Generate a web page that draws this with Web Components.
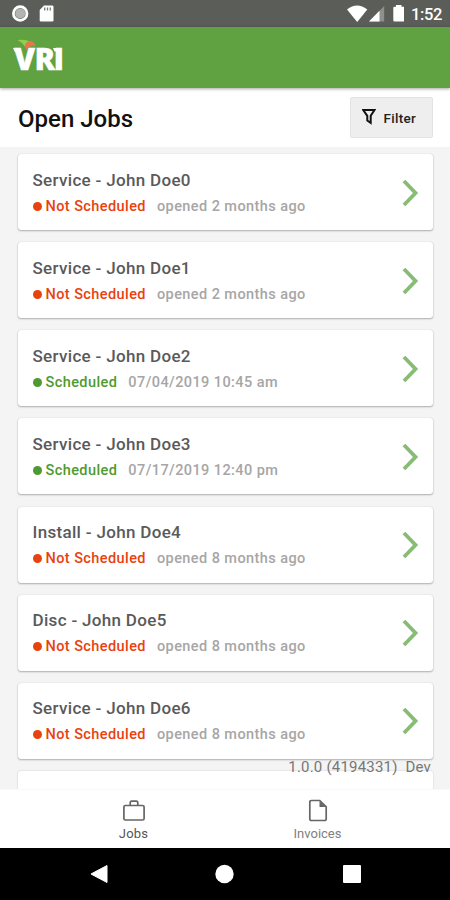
<!DOCTYPE html>
<html lang="en">
<head>
<meta charset="utf-8">
<title>Open Jobs</title>
<style>
  body {
    margin: 0;
    font-family: Roboto, "Liberation Sans", sans-serif;
  }
</style>
</head>
<body>
<jobs-app></jobs-app>
<script>
const makeTemplate = (html) => {
  const template = document.createElement('template');
  template.innerHTML = html;
  return template;
};

class BaseElement extends HTMLElement {
  constructor() {
    super();
    this.attachShadow({ mode: 'open' });
    this.shadowRoot.appendChild(this.constructor.template.content.cloneNode(true));
  }
}

class StatusBar extends BaseElement {
  static template = makeTemplate(`
    <style>
      :host {
        display: flex;
        align-items: center;
        justify-content: space-between;
        height: 27px;
        background: #5b5d58;
        color: #fff;
      }
      svg { display: block; }
      .right { display: flex; align-items: center; padding-right: 8px; }
      span { font-size: 16.5px; font-weight: 500; line-height: 27px; margin-left: 7px; padding-top: 1px; letter-spacing: -0.4px; }
    </style>
    <svg width="60" height="27" viewBox="0 0 60 27">
      <circle cx="20.2" cy="13.5" r="5" fill="#b4b5b2"/>
      <circle cx="20.2" cy="13.5" r="6.8" fill="none" stroke="#fff" stroke-width="2.8"/>
      <path d="M44 5.5h8.2q1.3 0 1.3 1.3v13.4q0 1.3-1.3 1.3H41q-1.3 0-1.3-1.3V10z" fill="#fff"/>
      <path d="M44.7 7.5v3M47.5 7.5v3M50.3 7.5v3" stroke="#777974" stroke-width="1.3"/>
    </svg>
    <div class="right">
      <svg width="60" height="27" viewBox="343.5 0 60 27">
        <path d="M346.5 9.5Q356.5 1.500 366.8 9.500L356.700 22z" fill="#fff"/>
        <path d="M383.7 6v15.500H368.500z" fill="#8f908d"/>
        <path d="M379 10.800v10.700H368.500z" fill="#fff"/>
        <path d="M395.500 5h5.500v1.700h2q1.300 0 1.300 1.300v12.200q0 1.300-1.300 1.300h-8.900q-1.300 0-1.300-1.300V8q0-1.300 1.300-1.300h1.400z" fill="#fff"/>
      </svg>
      <span>1:52</span>
    </div>
  `);
}

class BrandBar extends BaseElement {
  static template = makeTemplate(`
    <style>
      :host {
        display: block;
        position: relative;
        z-index: 1;
        height: 61px;
        background: #60a141;
        box-shadow: 0 1px 3px rgba(0, 0, 0, .35);
      }
      svg { display: block; }
      text { font-family: "Open Sans", sans-serif; font-weight: 800; }
    </style>
    <svg width="80" height="61" viewBox="0 27 80 61">
      <text x="14 34.5 53.5" y="70" font-size="30.5" fill="#fff" stroke="#fff" stroke-width=".3">VRI</text>
      <path d="M13 48h5v4h-3zM53 48h5v3.500h-3.500z" fill="#fff"/>
      <path d="M17.500 40q10-1 14 3l-6 4q-3-4.500-8-7z" fill="#8fcf4d"/>
      <path d="M24.500 46.500q1.500-5.500 5.500-5.500 4.500.5 5.500 5-5-1-9 3.500z" fill="#e9764a"/>
    </svg>
  `);
}

class FilterButton extends BaseElement {
  static template = makeTemplate(`
    <style>
      :host {
        display: flex;
        align-items: center;
        box-sizing: border-box;
        width: 83px;
        height: 41px;
        padding: 0 0 0 11px;
        border: 1px solid #e3e3e3;
        border-radius: 2px;
        background: #eee;
        color: #222;
        font-size: 13.5px;
        font-weight: 500;
        letter-spacing: .3px;
      }
      svg { display: block; margin: -2px 7.5px 0 0; }
    </style>
    <svg width="14" height="17" viewBox="0 0 14 17">
      <path d="M1.2 2h11.300L8.700 7.800v7L5.300 12.500V7.800z" fill="none" stroke="#111" stroke-width="2"/>
    </svg>
    <slot></slot>
  `);
}

class PageHeader extends BaseElement {
  static template = makeTemplate(`
    <style>
      :host {
        display: flex;
        align-items: center;
        justify-content: space-between;
        box-sizing: border-box;
        height: 59px;
        padding: 0 17px 0 18px;
        background: #fff;
      }
      h1 { margin: 3px 0 0; font-size: 24px; font-weight: 500; color: #111; }
    </style>
    <h1><slot></slot></h1>
    <slot name="action"></slot>
  `);
}

class JobCard extends BaseElement {
  static template = makeTemplate(`
    <style>
      :host {
        display: flex;
        align-items: center;
        justify-content: space-between;
        box-sizing: border-box;
        flex: none;
        height: 76px;
        padding: 1px 14px 0 14.5px;
        border-radius: 3px;
        background: #fff;
        box-shadow: 0 1px 2px rgba(0, 0, 0, .28), 0 0 1px rgba(0, 0, 0, .2);
        --status: #e8420f;
      }
      :host([scheduled]) { --status: #4f9a30; }
      .title { font-size: 17px; font-weight: 500; line-height: 22px; letter-spacing: .32px; color: #5a5a5a; }
      .info {
        display: flex;
        align-items: center;
        margin-top: 6px;
        font-size: 14.5px;
        line-height: 20px;
        font-weight: 500;
        letter-spacing: .42px;
        color: #a6a6a6;
      }
      .dot { width: 9px; height: 9px; border-radius: 50%; background: var(--status); margin: -1px 4px 0 0; }
      .status { color: var(--status); margin-right: 11px; }
      svg { display: block; }
    </style>
    <div>
      <div class="title"></div>
      <div class="info">
        <span class="dot"></span>
        <span class="status"></span>
        <span class="detail"></span>
      </div>
    </div>
    <svg width="17" height="28" viewBox="0 0 17 28">
      <path d="M2 2l11.500 12L2 26" fill="none" stroke="#88bb76" stroke-width="3.800"/>
    </svg>
  `);

  connectedCallback() {
    const root = this.shadowRoot;
    root.querySelector('.title').textContent = this.getAttribute('name');
    root.querySelector('.status').textContent = this.hasAttribute('scheduled') ? 'Scheduled' : 'Not Scheduled';
    root.querySelector('.detail').textContent = this.getAttribute('detail');
  }
}

// Next row of the list, cut off by the tab bar
class BlankCard extends BaseElement {
  static template = makeTemplate(`
    <style>
      :host {
        display: block;
        flex: none;
        height: 76px;
        border-radius: 3px;
        background: #fff;
        box-shadow: 0 0 2px rgba(0, 0, 0, .2);
      }
    </style>
  `);
}

class JobList extends BaseElement {
  static template = makeTemplate(`
    <style>
      :host {
        display: flex;
        flex-direction: column;
        gap: 12.15px;
        position: relative;
        box-sizing: border-box;
        height: 642px;
        padding: 7px 17px 0 18px;
        overflow: hidden;
        background: #f4f4f4;
      }
      .version {
        position: absolute;
        right: 19px;
        bottom: 12px;
        font-size: 15px;
        line-height: 20px;
        letter-spacing: .2px;
        color: #777;
        white-space: pre;
      }
    </style>
    <slot></slot>
    <div class="version">1.0.0 (4194331)  Dev</div>
  `);
}

class TabItem extends BaseElement {
  static template = makeTemplate(`
    <style>
      :host {
        display: flex;
        flex-direction: column;
        align-items: center;
        width: 184px;
        color: #808080;
        font-size: 13px;
        line-height: 16px;
      }
      :host([active]) { color: #555; letter-spacing: .2px; }
      ::slotted(svg) { display: block; margin: 9px 0 3px; }
    </style>
    <slot name="icon"></slot>
    <slot></slot>
  `);
}

class TabBar extends BaseElement {
  static template = makeTemplate(`
    <style>
      :host {
        display: flex;
        justify-content: center;
        box-sizing: border-box;
        height: 59px;
        padding-left: 1px;
        background: #fff;
        border-top: 1px solid #f9f9f9;
      }
    </style>
    <slot></slot>
  `);
}

class SystemNav extends BaseElement {
  static template = makeTemplate(`
    <style>
      :host {
        display: flex;
        justify-content: space-between;
        align-items: center;
        height: 52px;
        padding: 0 89px 0 89.5px;
        background: #000;
      }
    </style>
    <svg width="18" height="20" viewBox="0 0 18 20"><path d="M17 1.5v17L1 10z" fill="#fff" stroke="#fff" stroke-linejoin="round"/></svg>
    <svg width="20" height="20" viewBox="0 0 20 20"><circle cx="9.5" cy="10" r="9.2" fill="#fff"/></svg>
    <svg width="18" height="18" viewBox="0 0 18 18"><rect width="18" height="18" rx="1" fill="#fff"/></svg>
  `);
}

class JobsApp extends BaseElement {
  static template = makeTemplate(`
    <style>
      :host {
        display: flex;
        flex-direction: column;
        width: 450px;
        height: 900px;
        overflow: hidden;
      }
    </style>
    <status-bar></status-bar>
    <brand-bar></brand-bar>
    <page-header>Open Jobs<filter-button slot="action">Filter</filter-button></page-header>
    <job-list>
      <job-card name="Service - John Doe0" detail="opened 2 months ago"></job-card>
      <job-card name="Service - John Doe1" detail="opened 2 months ago"></job-card>
      <job-card name="Service - John Doe2" detail="07/04/2019 10:45 am" scheduled></job-card>
      <job-card name="Service - John Doe3" detail="07/17/2019 12:40 pm" scheduled></job-card>
      <job-card name="Install - John Doe4" detail="opened 8 months ago"></job-card>
      <job-card name="Disc - John Doe5" detail="opened 8 months ago"></job-card>
      <job-card name="Service - John Doe6" detail="opened 8 months ago"></job-card>
      <blank-card></blank-card>
    </job-list>
    <tab-bar>
      <tab-item active>
        <svg slot="icon" width="24" height="24" viewBox="0 0 24 24" fill="none" stroke="#666" stroke-width="1.7">
          <rect x="1.9" y="6.500" width="20.200" height="14.500" rx="1.500"/>
          <path d="M8.200 6.500V4q0-1.800 1.500-1.800h4.600q1.500 0 1.500 1.800v2.500"/>
        </svg>
        Jobs
      </tab-item>
      <tab-item>
        <svg slot="icon" width="24" height="24" viewBox="0 0 24 24" fill="none" stroke="#666" stroke-width="1.7">
          <path d="M5.500 1.500h8.300l6.400 6.300v12q0 1.700-1.700 1.700h-13q-1.700 0-1.700-1.700V3.200q0-1.700 1.700-1.700z"/>
          <path d="M13.500 2v6h6z" fill="#666" stroke="none"/>
        </svg>
        Invoices
      </tab-item>
    </tab-bar>
    <system-nav></system-nav>
  `);
}

customElements.define('status-bar', StatusBar);
customElements.define('brand-bar', BrandBar);
customElements.define('filter-button', FilterButton);
customElements.define('page-header', PageHeader);
customElements.define('job-card', JobCard);
customElements.define('blank-card', BlankCard);
customElements.define('job-list', JobList);
customElements.define('tab-item', TabItem);
customElements.define('tab-bar', TabBar);
customElements.define('system-nav', SystemNav);
customElements.define('jobs-app', JobsApp);
</script>
</body>
</html>
